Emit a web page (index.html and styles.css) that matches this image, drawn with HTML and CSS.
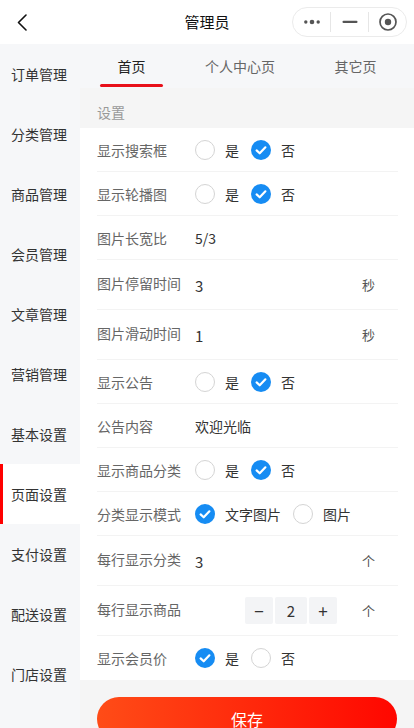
FILE: index.html
```html
<!DOCTYPE html>
<html>
<head>
    <meta charset="UTF-8">
    <meta name="viewport" content="width=device-width, initial-scale=1.0">
    <title>管理员</title>
    <link rel="stylesheet" href="styles.css">
</head>
<body>
<div class="page">
    <header class="navbar">
        <span class="nav-back">
            <svg width="12" height="17" viewBox="0 0 12 17"><path d="M10 1 L2.5 8.5 L10 16" fill="none" stroke="#111" stroke-width="1.6" stroke-linecap="round" stroke-linejoin="round"/></svg>
        </span>
        <div class="nav-title">管理员</div>
        <div class="capsule">
            <span class="cap-btn">
                <svg width="18" height="6" viewBox="0 0 18 6"><circle cx="2.8" cy="3" r="1.7" fill="#555"/><circle cx="9" cy="3" r="2.3" fill="#555"/><circle cx="15.2" cy="3" r="1.7" fill="#555"/></svg>
            </span>
            <span class="cap-line"></span>
            <span class="cap-btn">
                <svg width="16" height="4" viewBox="0 0 16 4"><rect x="0.5" y="0.7" width="15" height="2.4" rx="1" fill="#555"/></svg>
            </span>
            <span class="cap-line"></span>
            <span class="cap-btn">
                <svg width="20" height="20" viewBox="0 0 20 20"><circle cx="10" cy="10" r="8" fill="none" stroke="#555" stroke-width="1.7"/><circle cx="10" cy="10" r="3.2" fill="#555"/></svg>
            </span>
        </div>
    </header>

    <div class="main">
        <nav class="sidebar">
            <div class="side-item">订单管理</div>
            <div class="side-item">分类管理</div>
            <div class="side-item">商品管理</div>
            <div class="side-item">会员管理</div>
            <div class="side-item">文章管理</div>
            <div class="side-item">营销管理</div>
            <div class="side-item">基本设置</div>
            <div class="side-item active">页面设置</div>
            <div class="side-item">支付设置</div>
            <div class="side-item">配送设置</div>
            <div class="side-item">门店设置</div>
        </nav>

        <section class="content">
            <div class="tabs">
                <span class="tab active">首页</span>
                <span class="tab">个人中心页</span>
                <span class="tab">其它页</span>
            </div>

            <div class="group-title">设置</div>

            <div class="form">
                <div class="row">
                    <span class="label">显示搜索框</span>
                    <div class="radios">
                        <span class="radio"><i class="dot"></i>是</span>
                        <span class="radio"><i class="dot on"></i>否</span>
                    </div>
                </div>
                <div class="row">
                    <span class="label">显示轮播图</span>
                    <div class="radios">
                        <span class="radio"><i class="dot"></i>是</span>
                        <span class="radio"><i class="dot on"></i>否</span>
                    </div>
                </div>
                <div class="row">
                    <span class="label">图片长宽比</span>
                    <span class="value">5/3</span>
                </div>
                <div class="row tall">
                    <span class="label">图片停留时间</span>
                    <span class="value num">3</span>
                    <span class="unit">秒</span>
                </div>
                <div class="row tall">
                    <span class="label">图片滑动时间</span>
                    <span class="value num">1</span>
                    <span class="unit">秒</span>
                </div>
                <div class="row">
                    <span class="label">显示公告</span>
                    <div class="radios">
                        <span class="radio"><i class="dot"></i>是</span>
                        <span class="radio"><i class="dot on"></i>否</span>
                    </div>
                </div>
                <div class="row">
                    <span class="label">公告内容</span>
                    <span class="value">欢迎光临</span>
                </div>
                <div class="row">
                    <span class="label">显示商品分类</span>
                    <div class="radios">
                        <span class="radio"><i class="dot"></i>是</span>
                        <span class="radio"><i class="dot on"></i>否</span>
                    </div>
                </div>
                <div class="row">
                    <span class="label">分类显示模式</span>
                    <div class="radios">
                        <span class="radio"><i class="dot on"></i>文字图片</span>
                        <span class="radio"><i class="dot"></i>图片</span>
                    </div>
                </div>
                <div class="row tall">
                    <span class="label">每行显示分类</span>
                    <span class="value num">3</span>
                    <span class="unit">个</span>
                </div>
                <div class="row tall">
                    <span class="label">每行显示商品</span>
                    <div class="stepper-wrap">
                        <div class="stepper">
                            <span class="step-btn">−</span>
                            <span class="step-val">2</span>
                            <span class="step-btn">+</span>
                        </div>
                    </div>
                    <span class="unit">个</span>
                </div>
                <div class="row last">
                    <span class="label">显示会员价</span>
                    <div class="radios">
                        <span class="radio"><i class="dot on"></i>是</span>
                        <span class="radio"><i class="dot"></i>否</span>
                    </div>
                </div>
            </div>

            <div class="footer">
                <button class="save-btn">保存</button>
            </div>
        </section>
    </div>
</div>
</body>
</html>
```

FILE: styles.css
```css
/* base */
* {
    box-sizing: border-box;
}

html, body {
    margin: 0;
    padding: 0;
    height: 728px;
    overflow: hidden;
}

body {
    font-family: "Noto Sans CJK SC", "Noto Sans", sans-serif;
    font-size: 14px;
    color: #333;
    background: #fff;
}

/* navbar */
.navbar {
    height: 44px;
    display: grid;
    grid-template-columns: 1fr auto 1fr;
    align-items: center;
    background: #fff;
}

.nav-back {
    display: flex;
    align-items: center;
    padding-left: 16px;
}

.nav-title {
    font-size: 15px;
    color: #111;
    line-height: 20px;
}

.capsule {
    justify-self: end;
    margin-right: 7px;
    width: 115px;
    height: 30px;
    border: 1px solid #ebebeb;
    border-radius: 15px;
    display: flex;
    align-items: center;
}

.cap-btn {
    flex: 1;
    display: flex;
    align-items: center;
    justify-content: center;
}

.cap-line {
    width: 1px;
    height: 20px;
    background: #e6e6e6;
}

/* layout */
.main {
    display: flex;
    height: 684px;
}

.sidebar {
    width: 80px;
    flex-shrink: 0;
    background: #f6f7f9;
}

.side-item {
    height: 60px;
    display: flex;
    align-items: center;
    padding-left: 11px;
    padding-bottom: 1px;
    font-size: 14px;
    color: #333;
    position: relative;
}

.side-item.active {
    background: #fff;
}

.side-item.active::before {
    content: "";
    position: absolute;
    left: 0;
    top: 0;
    width: 3px;
    height: 60px;
    background: #f00;
}

.content {
    flex: 1;
    background: #f5f5f5;
}

/* tabs */
.tabs {
    height: 44px;
    display: flex;
    justify-content: space-between;
    padding: 0 20px;
    background: #f6f7f9;
}

.tab {
    position: relative;
    padding: 0 17.5px;
    line-height: 44px;
    font-size: 14px;
    color: #666;
}

.tab.active {
    color: #222;
}

.tab.active::after {
    content: "";
    position: absolute;
    left: 0;
    right: 0;
    bottom: 1px;
    height: 3px;
    border-radius: 2px;
    background: #e8101a;
}

.group-title {
    padding: 14px 17px 6px;
    line-height: 20px;
    color: #999;
    font-size: 14px;
}

/* form */
.form {
    background: #fff;
    padding: 0 16px 0 17px;
}

.row {
    height: 44px;
    display: flex;
    align-items: center;
    border-bottom: 1px solid #f3f3f3;
}

.row.tall {
    height: 50px;
}

.row.last {
    border-bottom: none;
}

.label {
    width: 98px;
    flex-shrink: 0;
    color: #666;
    line-height: 20px;
}

.row.tall .label {
    margin-top: -3px;
}

.value {
    flex: 1;
    color: #333;
    line-height: 20px;
}

.value.num {
    font-size: 15px;
    padding-top: 2px;
}

.unit {
    margin-right: 23px;
    color: #555;
    font-size: 13px;
}

.radios {
    display: flex;
    align-items: center;
}

.radio {
    display: flex;
    align-items: center;
    color: #333;
    line-height: 20px;
    margin-right: 12px;
}

.dot {
    width: 20px;
    height: 20px;
    border-radius: 50%;
    border: 1px solid #d4d4d4;
    margin-right: 10px;
    background: #fff;
}

.dot.on {
    border: none;
    background: #168cf3 url("data:image/svg+xml,%3Csvg xmlns='http://www.w3.org/2000/svg' viewBox='0 0 20 20'%3E%3Cpath d='M5.6 10.4 L8.7 13.3 L14.4 7.3' fill='none' stroke='%23fff' stroke-width='2.2' stroke-linecap='round' stroke-linejoin='round'/%3E%3C/svg%3E") center / 20px 20px no-repeat;
}

/* stepper */
.stepper-wrap {
    flex: 1;
    display: flex;
    justify-content: flex-end;
    margin-right: 25px;
}

.stepper {
    display: flex;
    gap: 2px;
}

.step-btn,
.step-val {
    height: 27px;
    display: flex;
    align-items: center;
    justify-content: center;
    background: #f3f4f6;
    color: #333;
    border-radius: 2px;
}

.step-btn {
    width: 28px;
    font-size: 17px;
}

.step-val {
    width: 32px;
    font-size: 15px;
}

/* footer */
.footer {
    padding: 17px 17px 0;
}

.save-btn {
    display: block;
    width: 100%;
    height: 44px;
    border: none;
    border-radius: 22px;
    background: linear-gradient(90deg, #ff4c17, #ff0700);
    color: #fff;
    font-size: 16px;
    font-family: "Noto Sans CJK SC", sans-serif;
    padding: 0;
}
```
